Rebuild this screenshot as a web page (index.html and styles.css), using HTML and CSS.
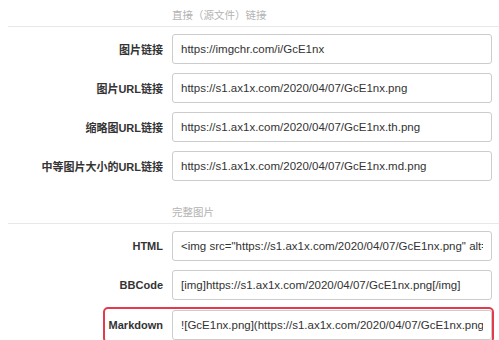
FILE: index.html
```html
<!DOCTYPE html>
<html lang="zh">
<head>
<meta charset="utf-8">
<link rel="stylesheet" href="styles.css">
</head>
<body>
<div class="page">
  <div class="legend"><span>直接（源文件）链接</span></div>
  <div class="rows">
    <div class="row"><label class="label">图片链接</label><input class="field" value="https://imgchr.com/i/GcE1nx" readonly></div>
    <div class="row"><label class="label">图片URL链接</label><input class="field" value="https://s1.ax1x.com/2020/04/07/GcE1nx.png" readonly></div>
    <div class="row"><label class="label">缩略图URL链接</label><input class="field" value="https://s1.ax1x.com/2020/04/07/GcE1nx.th.png" readonly></div>
    <div class="row"><label class="label">中等图片大小的URL链接</label><input class="field" value="https://s1.ax1x.com/2020/04/07/GcE1nx.md.png" readonly></div>
  </div>
  <div class="legend legend-second"><span>完整图片</span></div>
  <div class="rows">
    <div class="row"><label class="label">HTML</label><input class="field" value='&lt;img src="https://s1.ax1x.com/2020/04/07/GcE1nx.png" alt="GcE1nx.png" border="0" /&gt;' readonly></div>
    <div class="row"><label class="label">BBCode</label><input class="field" value="[img]https://s1.ax1x.com/2020/04/07/GcE1nx.png[/img]" readonly></div>
    <div class="row highlight"><label class="label">Markdown</label><input class="field" value="![GcE1nx.png](https://s1.ax1x.com/2020/04/07/GcE1nx.png)" readonly></div>
  </div>
</div>
</body>
</html>
```
FILE: styles.css
```css
html, body {
  margin: 0;
  padding: 0;
  background: #ffffff;
  overflow: hidden;
}
.page {
  padding: 0 7px 0 8px;
  font-family: "Liberation Sans", "Noto Sans CJK SC", sans-serif;
  color: #333333;
}
.legend {
  padding: 7px 0 3px 164px;
  line-height: 16px;
  border-bottom: 1px solid #e8e8e8;
  margin-right: -7px;
  font-size: 10.5px;
  color: #b3b3b3;
  font-family: "Noto Sans CJK SC", sans-serif;
}
.legend-second {
  margin-top: 16px;
}
.rows {
  display: flex;
  flex-direction: column;
  gap: 9px;
  margin-top: 7px;
}
.row {
  display: flex;
  align-items: center;
  gap: 9px;
}
.label {
  width: 155px;
  flex: none;
  text-align: right;
  font-weight: bold;
  font-size: 11px;
  color: #333333;
}
.field {
  flex: 1;
  min-width: 0;
  height: 30px;
  box-sizing: border-box;
  border: 1px solid #cccccc;
  border-radius: 3px;
  padding: 0 8px;
  margin: 0;
  font-family: "Liberation Sans", sans-serif;
  font-size: 11.5px;
  color: #333333;
  background: #ffffff;
  outline: none;
}
.highlight {
  position: relative;
  margin-top: 1px;
}
.highlight::after {
  content: "";
  position: absolute;
  left: 95px;
  right: -2px;
  top: -3px;
  bottom: -3px;
  border: 2px solid #e23b4d;
  border-radius: 5px;
  pointer-events: none;
}
```
